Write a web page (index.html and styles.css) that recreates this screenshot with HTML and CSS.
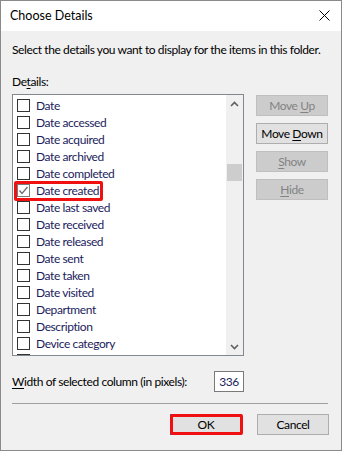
FILE: index.html
```html
<!DOCTYPE html>
<html>
<head>
<meta charset="utf-8">
<link rel="stylesheet" href="styles.css">
</head>
<body>
<div class="window">
  <div class="titlebar">
    <span class="title">Choose Details</span>
    <svg class="close" width="11" height="11" viewBox="0 0 11 11"><path d="M0.5 0.5 L10.5 10.5 M10.5 0.5 L0.5 10.5" stroke="#000" stroke-width="1" fill="none"/></svg>
  </div>
  <div class="content">
    <p class="intro">Select the details you want to display for the items in this folder.</p>
    <div class="label">De<u>t</u>ails:</div>
    <div class="main">
      <div class="listbox">
        <ul class="items">
          <li><span class="cb"></span><span>Date</span></li>
          <li><span class="cb"></span><span>Date accessed</span></li>
          <li><span class="cb"></span><span>Date acquired</span></li>
          <li><span class="cb"></span><span>Date archived</span></li>
          <li><span class="cb"></span><span>Date completed</span></li>
          <li><span class="wrap"><span class="cb checked"><svg width="11" height="11" viewBox="0 0 11 11"><path d="M1.5 5.5 L4 8.5 L9.5 2" stroke="#6e6e6e" stroke-width="1.3" fill="none"/></svg></span><span>Date created</span></span></li>
          <li><span class="cb"></span><span>Date last saved</span></li>
          <li><span class="cb"></span><span>Date received</span></li>
          <li><span class="cb"></span><span>Date released</span></li>
          <li><span class="cb"></span><span>Date sent</span></li>
          <li><span class="cb"></span><span>Date taken</span></li>
          <li><span class="cb"></span><span>Date visited</span></li>
          <li><span class="cb"></span><span>Department</span></li>
          <li><span class="cb"></span><span>Description</span></li>
          <li><span class="cb"></span><span>Device category</span></li>
          <li><span class="cb"></span></li>
        </ul>
        <div class="scrollbar">
          <div class="arrow"><svg width="9" height="6" viewBox="0 0 9 6"><path d="M1 5 L4.5 1.5 L8 5" stroke="#606060" stroke-width="1.6" fill="none"/></svg></div>
          <div class="track"><div class="thumb"></div></div>
          <div class="arrow"><svg width="9" height="6" viewBox="0 0 9 6"><path d="M1 1 L4.5 4.5 L8 1" stroke="#606060" stroke-width="1.6" fill="none"/></svg></div>
        </div>
      </div>
      <div class="side">
        <div class="btn disabled"><span>Move <u>U</u>p</span></div>
        <div class="btn"><span>Move <u>D</u>own</span></div>
        <div class="btn disabled"><span><u>S</u>how</span></div>
        <div class="btn disabled"><span><u>H</u>ide</span></div>
      </div>
    </div>
    <div class="widthrow">
      <span class="wlabel"><u>W</u>idth of selected column (in pixels):</span>
      <span class="input">336</span>
    </div>
    <div class="sep"></div>
    <div class="footer">
      <div class="btn ok"><span>OK</span><span class="redbox2"></span></div>
      <div class="btn cancel"><span>Cancel</span></div>
    </div>
  </div>
</div>
</body>
</html>
```
FILE: styles.css
```css
* { box-sizing: border-box; }
html, body { margin: 0; padding: 0; }
body {
  font-family: Lato, "Liberation Sans", sans-serif;
  font-size: 12px;
  letter-spacing: -0.4px;
  color: #000;
  background: #fff;
}
.window {
  width: 342px;
  height: 451px;
  border: 1px solid #8a8a8a;
  background: #f0f0f0;
  display: flex;
  flex-direction: column;
}
.titlebar {
  height: 30px;
  flex: none;
  background: #fff;
  display: flex;
  align-items: center;
  justify-content: space-between;
  padding: 0 11px 0 9px;
}
.title { line-height: 16px; letter-spacing: 0; font-size: 12.5px; }
.close { display: block; margin-top: -1px; }
.content {
  padding: 11px 0 0 11px;
  display: flex;
  flex-direction: column;
}
.intro { margin: 0; line-height: 16px; white-space: nowrap; }
.label { margin-top: 16px; line-height: 16px; }
u { text-decoration-thickness: 1px; text-underline-offset: 2px; }
.main {
  margin-top: 4px;
  display: flex;
  gap: 12px;
  align-items: flex-start;
}
.listbox {
  width: 232px;
  height: 262px;
  flex: none;
  border: 1px solid #828790;
  background: #fff;
  display: flex;
  overflow: hidden;
}
.items {
  list-style: none;
  margin: 0;
  padding: 2px 0 0 4px;
  flex: 1;
  overflow: hidden;
}
.items li {
  height: 17px;
  display: flex;
  align-items: center;
  color: #1c1c5c;
  white-space: nowrap;
}
.cb {
  width: 13px;
  height: 13px;
  border: 1px solid #333;
  background: #fff;
  margin-right: 6px;
  flex: none;
  display: flex;
  align-items: center;
  justify-content: center;
}
.cb.checked { border-color: #7a7a7a; }
.cb svg { display: block; }
.wrap {
  position: relative;
  display: flex;
  align-items: center;
  height: 17px;
}
.wrap::after {
  content: "";
  position: absolute;
  left: -3px;
  right: -4px;
  top: -1px;
  bottom: -2px;
  border: 3px solid #f01010;
  border-radius: 2px;
}
.scrollbar {
  width: 17px;
  flex: none;
  background: #f0f0f0;
  display: flex;
  flex-direction: column;
}
.arrow {
  height: 17px;
  display: flex;
  align-items: center;
  justify-content: center;
}
.track { flex: 1; padding-top: 52px; }
.thumb { height: 17px; margin: 0 1px; background: #cdcdcd; }
.side {
  margin-top: 1px;
  display: flex;
  flex-direction: column;
  gap: 7px;
}
.btn {
  width: 72px;
  height: 21px;
  border: 1px solid #adadad;
  background: #e1e1e1;
  display: flex;
  align-items: center;
  justify-content: center;
  line-height: 16px;
  position: relative;
  white-space: nowrap;
}
.btn.disabled {
  background: #cccccc;
  border-color: #bfbfbf;
  color: #838383;
}
.widthrow {
  margin-top: 15px;
  width: 232px;
  display: flex;
  align-items: center;
  justify-content: space-between;
}
.wlabel { line-height: 16px; white-space: nowrap; }
.input {
  width: 30px;
  height: 21px;
  flex: none;
  border: 1px solid #7a7a7a;
  background: #fff;
  display: flex;
  align-items: center;
  justify-content: center;
  color: #1c1c5c;
}
.sep {
  margin-top: 11px;
  width: 316px;
  height: 1px;
  background: #a0a0a0;
}
.footer {
  margin-top: 10px;
  width: 317px;
  display: flex;
  justify-content: flex-end;
  gap: 15px;
}
.btn.ok { border-color: #0078d7; }
.redbox2 {
  position: absolute;
  left: -1px;
  top: -1px;
  width: 73px;
  height: 21px;
  border: 3px solid #f01010;
  border-radius: 2px;
}
```
